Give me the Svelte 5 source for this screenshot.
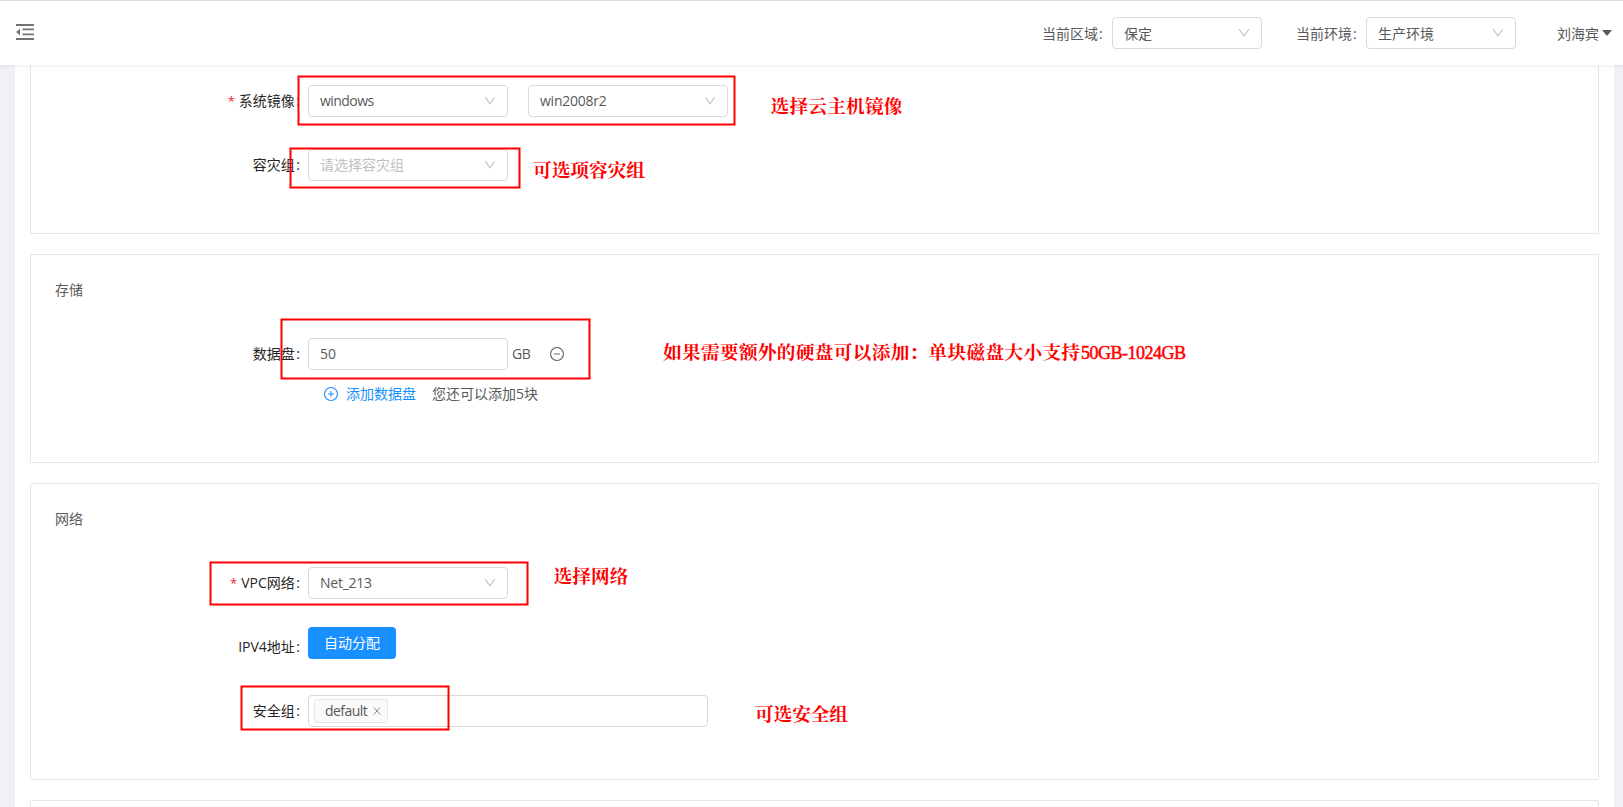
<script>
  const boxes = [
    [298.5, 76.5, 436, 48],
    [290.5, 148.5, 229, 39],
    [281.5, 319.5, 308, 59],
    [210.5, 562.5, 317, 42],
    [241.5, 686.5, 207, 43]
  ];
  const notes = [
    { x: 770.5, y: 112.5, w: 132, t: '选择云主机镜像' },
    { x: 533, y: 176.5, w: 112, t: '可选项容灾组' },
    { x: 663, y: 359, w: 417, t: '如果需要额外的硬盘可以添加：单块磁盘大小支持' },
    { x: 1081, y: 359, w: 105, t: '50GB-1024GB', latin: true },
    { x: 553.5, y: 582.5, w: 75, t: '选择网络' },
    { x: 755, y: 720.5, w: 93, t: '可选安全组' }
  ];
</script>

{#snippet chevron()}
  <svg class="chev" viewBox="0 0 12 12"><path d="M1.2 2.2 6 8.8l4.8-6.6" fill="none" stroke="#bfbfbf" stroke-width="1.1" /></svg>
{/snippet}

{#snippet select(text, kind)}
  <div class="select {kind}"><span>{text}</span>{@render chevron()}</div>
{/snippet}

{#snippet label(text, required)}
  <div class="label">{#if required}<i>*</i>{/if}<span>{text}</span><b>:</b></div>
{/snippet}

<div class="page">
  <header>
    <svg class="fold" viewBox="0 0 18 16">
      <path d="M0 0h18v2H0zM0 14h18v2H0zM6.5 4.6H18v1.6H6.5zM6.5 9.6H18v1.6H6.5zM0 8l4-3.2v6.4z" fill="#595959" fill-opacity=".85" />
    </svg>
    <div class="tools">
      <span class="hl">当前区域<b>:</b></span>
      <div class="hs">{@render select('保定', '')}</div>
      <span class="hl second">当前环境<b>:</b></span>
      <div class="hs">{@render select('生产环境', '')}</div>
      <span class="user">刘海宾</span>
      <svg class="caret" viewBox="0 0 10 6"><path d="M0 0h10L5 6z" fill="#595959" /></svg>
    </div>
  </header>

  <main>
    <section class="card image">
      <div class="row">
        {@render label('系统镜像', true)}
        <div class="field pair">{@render select('windows', 'tight')}{@render select('win2008r2', 'snug')}</div>
      </div>
      <div class="row">
        {@render label('容灾组', false)}
        <div class="field">{@render select('请选择容灾组', 'placeholder')}</div>
      </div>
    </section>

    <section class="card storage">
      <h2>存储</h2>
      <div class="row disk">
        {@render label('数据盘', false)}
        <div class="field">
          <div class="input">50</div>
          <span class="unit">GB</span>
          <svg class="circle" viewBox="0 0 14 14"><circle cx="7" cy="7" r="6.45" fill="none" stroke="#595959" stroke-width="1.1" /><path d="M4 7h6" stroke="#8c8c8c" stroke-width="1.3" /></svg>
        </div>
      </div>
      <div class="add">
        <svg class="circle" viewBox="0 0 14 14"><circle cx="7" cy="7" r="6.45" fill="none" stroke="#1890ff" stroke-width="1.1" /><path d="M4 7h6M7 4v6" stroke="#1890ff" stroke-width="1" /></svg>
        <span class="link">添加数据盘</span>
        <span>您还可以添加5块</span>
      </div>
    </section>

    <section class="card network">
      <h2>网络</h2>
      <div class="row">
        {@render label('VPC网络', true)}
        <div class="field">{@render select('Net_213', 'snug')}</div>
      </div>
      <div class="row ip">
        {@render label('IPV4地址', false)}
        <div class="field"><button>自动分配</button></div>
      </div>
      <div class="row">
        {@render label('安全组', false)}
        <div class="field">
          <div class="multi">
            <span class="tag">default
              <svg viewBox="0 0 8 8"><path d="M.6.4l6.8 7.2M7.4.4.6 7.6" stroke="#8c8c8c" stroke-width="1" /></svg>
            </span>
          </div>
        </div>
      </div>
    </section>

    <section class="card next"></section>
  </main>

  <svg class="marks" width="1623" height="807">
    {#each boxes as [x, y, w, h]}
      <rect {x} {y} width={w} height={h} fill="none" stroke="#f00" stroke-width="2" />
    {/each}
    {#each notes as n}
      <text class:latin={n.latin} x={n.x} y={n.y} textLength={n.w}>{n.t}</text>
    {/each}
  </svg>
</div>

<style>
  .page, .page * { box-sizing: border-box; }
  .page {
    position: relative;
    width: 1623px;
    height: 807px;
    overflow: hidden;
    display: flex;
    flex-direction: column;
    background: #eff1f6;
    color: #595959;
    font: 14px/22px "Open Sans", "Noto Sans CJK SC", sans-serif;
  }
  header {
    position: relative;
    z-index: 1;
    flex: none;
    height: 65px;
    border-top: 1px solid #ddd;
    background: #fff;
    box-shadow: 0 1px 4px rgba(0, 21, 41, .08);
    display: flex;
    align-items: flex-start;
    padding: 16px 11px 0 16px;
  }
  .fold { width: 18px; height: 16px; margin-top: 7px; }
  .tools { display: flex; align-items: center; height: 32px; margin-left: auto; }
  .hl { width: 70px; padding-top: 2px; white-space: nowrap; }
  .hl b { font-weight: 400; margin-left: 1px; }
  .second { margin-left: 34px; }
  .hs { width: 150px; }
  .hs .select span { padding-top: 2px; }
  .user { margin-left: 41px; width: 45px; padding-top: 2px; }
  .caret { width: 10px; height: 6px; margin-bottom: 1px; }
  main {
    flex: none;
    width: 1599px;
    height: 900px;
    margin-left: 15px;
    padding: 0 15px;
    background: #fff;
    display: flex;
    flex-direction: column;
    gap: 20px;
  }
  .card {
    flex: none;
    border: 1px solid #e6e6e6;
    border-radius: 2px;
    padding: 0 24px;
  }
  .image { height: 169px; border-top: 0; padding-top: 20px; }
  .storage { height: 209px; }
  .network { height: 297px; }
  .next { height: 200px; }
  h2 { margin: 24px 0 37px; font-size: 14px; line-height: 22px; font-weight: 400; }
  .row { display: flex; height: 32px; margin-bottom: 32px; }
  .disk { margin-bottom: 13px; }
  .label {
    width: 253px;
    padding-right: 8px;
    display: flex;
    justify-content: flex-end;
    align-items: center;
    color: #262626;
    white-space: nowrap;
  }
  .label i { color: #f5222d; font-style: normal; margin-right: 4px; font-size: 13px; }
  .label b { font-weight: 400; margin-left: 1.5px; }
  .field { display: flex; align-items: center; }
  .pair { gap: 20px; }
  .field .select { width: 200px; }
  .select, .input, .multi {
    height: 32px;
    border: 1px solid #d9d9d9;
    border-radius: 4px;
    background: #fff;
    display: flex;
    align-items: center;
    padding: 0 11px;
  }
  .select { justify-content: space-between; }
  .placeholder { color: #bfbfbf; }
  .tight { letter-spacing: -.55px; }
  .snug { letter-spacing: -.25px; }
  .chev { width: 12px; height: 12px; }
  .input { width: 200px; }
  .unit { width: 38px; margin-left: 4px; letter-spacing: -.4px; }
  .circle { width: 14px; height: 14px; }
  .add { display: flex; align-items: center; height: 22px; padding-left: 269px; }
  .link { color: #1890ff; margin: 0 16px 0 8px; }
  .ip .field { align-items: flex-start; }
  .ip button {
    width: 88px;
    height: 32px;
    margin-top: -4px;
    padding: 0;
    border: 0;
    border-radius: 4px;
    background: #1890ff;
    color: #fff;
    font: inherit;
  }
  .multi { width: 400px; padding: 0 5px; }
  .tag {
    width: 74px;
    height: 24px;
    padding: 0 6px 0 10px;
    border: 1px solid #e8e8e8;
    border-radius: 2px;
    background: #fafafa;
    display: flex;
    align-items: center;
    justify-content: space-between;
    letter-spacing: -.55px;
  }
  .tag svg { width: 8px; height: 8px; }
  .marks { position: absolute; inset: 0; z-index: 2; pointer-events: none; }
  .marks text {
    fill: #f00;
    font: bold 18.67px "Liberation Serif", "Noto Serif CJK SC", "Noto Sans CJK SC", serif;
  }
  .marks .latin { font-weight: 400; font-size: 18px; stroke: #f00; stroke-width: .5px; }
</style>
